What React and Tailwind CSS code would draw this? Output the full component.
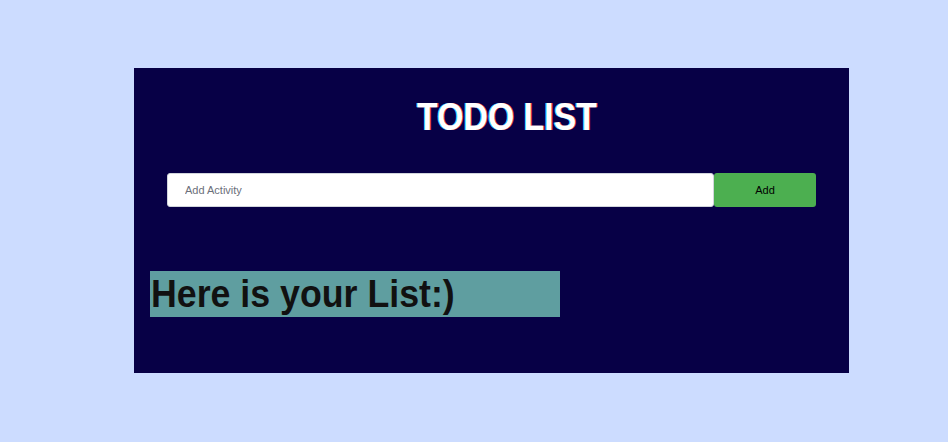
export default function App() {
	return (
		<div className="min-h-screen bg-[#ccdcff] pt-[68px] pl-[134px] font-['Liberation_Sans',Arial,sans-serif]">
			<div className="w-[715px] h-[305px] bg-[#070046] flex flex-col">
				<h1 className="pt-[26px] h-[71px] pl-[31px] text-center text-white text-[38px] leading-[46px] font-bold">
					<span className="inline-block scale-x-[0.89] [text-shadow:1px_0_#e04040,-1px_0_#40d0ff]">TODO LIST</span>
				</h1>
				<div className="flex mt-[34px] ml-[33px]">
					<input
						type="text"
						placeholder="Add Activity"
						className="w-[547px] h-[34px] bg-white border border-gray-300 rounded-[3px] pl-[17px] text-[11px] placeholder:text-[#6b6f7a] outline-none"
					/>
					<button className="w-[102px] h-[34px] bg-[#4caf50] rounded-[3px] text-[11px] text-black">
						Add
					</button>
				</div>
				<h2 className="mt-[64px] ml-[16px] w-[410px] h-[46px] bg-[#5f9ea0] text-[#111] text-[38px] leading-[46px] font-bold pl-[1px]">
					<span className="inline-block origin-left scale-x-[0.94]">Here is your List:)</span>
				</h2>
			</div>
		</div>
	);
}
